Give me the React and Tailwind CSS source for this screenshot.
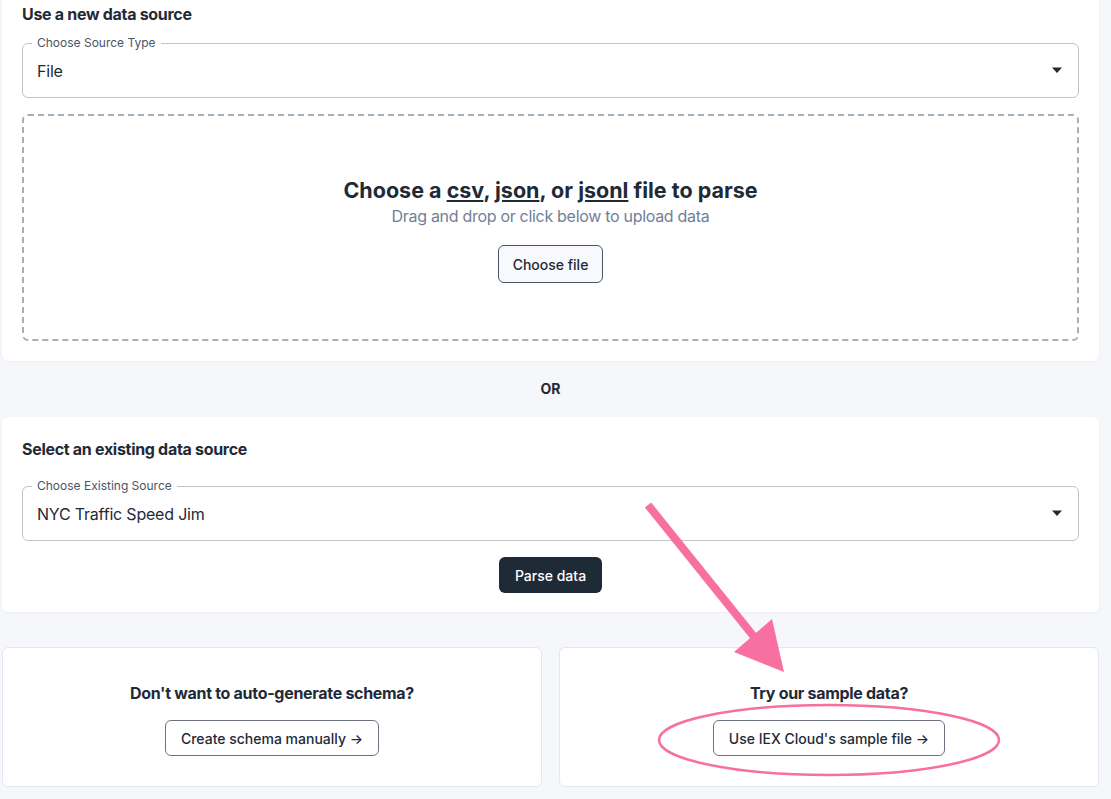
import React from "react";

function Select({ label, value }) {
  return (
    <div className="relative h-[55px] rounded-[6px] border border-[#c4c4c4] flex items-center pl-[14px] pr-[14px]">
      <span className="absolute -top-[9px] left-[9px] bg-white px-[5px] text-[12px] leading-[16px] text-[#4a5568]">
        {label}
      </span>
      <span className="flex-1 text-[16px] tracking-[-0.2px] text-[#1f2a37]">{value}</span>
      <svg width="12" height="7" viewBox="0 0 12 7" className="mr-[1px]">
        <path d="M1 0.5 L11 0.5 L6 6 Z" fill="#1f2a37" />
      </svg>
    </div>
  );
}

export default function App() {
  return (
    <div
      className="relative min-h-screen bg-[#f5f7fa] pl-[2px] pr-[12px] overflow-hidden"
      style={{ fontFamily: "Inter, Roboto, 'Liberation Sans', sans-serif" }}
    >
      {/* Card 1 */}
      <div className="-mt-[18px] bg-white rounded-[6px] shadow-[0_1px_3px_rgba(0,0,0,0.04)] px-5 pt-5 pb-5">
        <h2 className="text-[16px] leading-[24px] font-bold tracking-[-0.3px] text-[#1f2a37]">Use a new data source</h2>
        <div className="mt-[17px]">
          <Select label="Choose Source Type" value="File" />
        </div>
        <div className="mt-[16px] h-[227px] pt-[4px] rounded-[6px] border-2 border-dashed border-[#a3b1bd] flex flex-col items-center justify-center">
          <div className="text-[21.5px] leading-[28px] font-bold text-[#1f2a37]">
            Choose a <span className="underline underline-offset-2">csv</span>,{" "}
            <span className="underline underline-offset-2">json</span>, or{" "}
            <span className="underline underline-offset-2">jsonl</span> file to parse
          </div>
          <div className="text-[16px] leading-[24px] tracking-[-0.3px] text-[#718096]">Drag and drop or click below to upload data</div>
          <button className="mt-[17px] h-[38px] px-[14px] rounded-[6px] border border-[#4a5568] bg-[#f7f9fc] text-[14px] font-medium text-[#1f2a37]">
            Choose file
          </button>
        </div>
      </div>

      <div className="py-[18px] text-center text-[14px] leading-[20px] font-bold text-[#1f2a37]">OR</div>

      {/* Card 2 */}
      <div className="bg-white rounded-[6px] shadow-[0_1px_3px_rgba(0,0,0,0.04)] px-5 pt-[20px] pb-[19px]">
        <h2 className="text-[16px] leading-[24px] font-bold tracking-[-0.3px] text-[#1f2a37]">Select an existing data source</h2>
        <div className="mt-[25px]">
          <Select label="Choose Existing Source" value="NYC Traffic Speed Jim" />
        </div>
        <div className="mt-[16px] flex justify-center">
          <button className="h-[36px] px-[16px] rounded-[6px] bg-[#1f2a37] text-[14px] font-medium text-white">
            Parse data
          </button>
        </div>
      </div>

      {/* Bottom cards */}
      <div className="mt-[35px] grid grid-cols-2 gap-[17px]">
        <div className="h-[140px] bg-white rounded-[6px] border border-[#e2e8f0] flex flex-col items-center pt-[33px]">
          <div className="text-[16px] leading-[24px] font-bold tracking-[-0.3px] text-[#1f2a37]">Don't want to auto-generate schema?</div>
          <button className="mt-[15px] h-[36px] px-[15px] rounded-[6px] border border-[#6b7280] bg-white text-[14px] font-medium text-[#1f2a37]">
            Create schema manually →
          </button>
        </div>
        <div className="h-[140px] bg-white rounded-[6px] border border-[#e2e8f0] flex flex-col items-center pt-[33px]">
          <div className="text-[16px] leading-[24px] font-bold tracking-[-0.3px] text-[#1f2a37]">Try our sample data?</div>
          <button className="mt-[15px] h-[36px] px-[15px] rounded-[6px] border border-[#6b7280] bg-white text-[14px] font-medium text-[#1f2a37]">
            Use IEX Cloud's sample file →
          </button>
        </div>
      </div>

      {/* Annotation overlay */}
      <svg className="absolute left-0 top-0 pointer-events-none" width="1111" height="799" viewBox="0 0 1111 799">
        <line x1="648" y1="505" x2="755" y2="638" stroke="#f7709f" strokeWidth="8" strokeLinecap="butt" />
        <polygon points="734,652 772,619 784,672" fill="#f7709f" />
        <ellipse cx="829" cy="740" rx="170" ry="35" fill="none" stroke="#f7709f" strokeWidth="2.5" />
      </svg>
    </div>
  );
}
